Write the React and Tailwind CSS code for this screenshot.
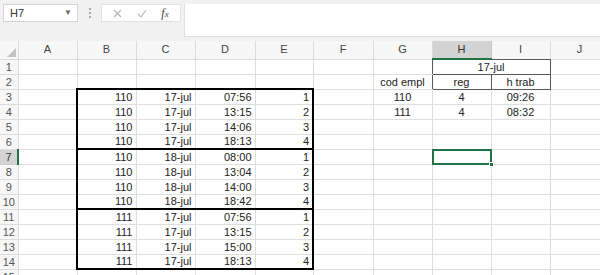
import React from 'react'

const COLS = ['A', 'B', 'C', 'D', 'E', 'F', 'G', 'H', 'I', 'J']
const WIDTHS = [18, 59, 59, 59, 60, 58, 60, 59, 59, 59, 59]

const DATA = {
  3: ['110', '17-jul', '07:56', '1'],
  4: ['110', '17-jul', '13:15', '2'],
  5: ['110', '17-jul', '14:06', '3'],
  6: ['110', '17-jul', '18:13', '4'],
  7: ['110', '18-jul', '08:00', '1'],
  8: ['110', '18-jul', '13:04', '2'],
  9: ['110', '18-jul', '14:00', '3'],
  10: ['110', '18-jul', '18:42', '4'],
  11: ['111', '17-jul', '07:56', '1'],
  12: ['111', '17-jul', '13:15', '2'],
  13: ['111', '17-jul', '15:00', '3'],
  14: ['111', '17-jul', '18:13', '4'],
}

const SUMMARY = {
  3: ['110', '4', '09:26'],
  4: ['111', '4', '08:32'],
}

const base = 'h-[15px] p-0 pt-px text-[#222] leading-none'

// each cell owns its right and bottom edge, like excel gridlines
function cellBorders(row, col) {
  const inBox = row >= 3 && row <= 14
  let right = 'border-r border-r-[#dedede]'
  let bottom = 'border-b border-b-[#dedede]'
  if ((col === 'A' || col === 'E') && inBox) right = 'border-r-2 border-r-black'
  if (['B', 'C', 'D', 'E'].includes(col) && [2, 6, 10, 14].includes(row)) bottom = 'border-b-2 border-b-black'
  if (col === 'G' && (row === 1 || row === 2)) right = 'border-r border-r-[#5a5a5a]'
  if ((col === 'H' || col === 'I') && row === 2) {
    right = 'border-r border-r-[#5a5a5a]'
    bottom = 'border-b border-b-[#5a5a5a]'
  }
  return ' ' + right + ' ' + bottom
}

function Toolbar() {
  return (
    <div className="h-[41px] bg-[#f1f1f1] flex items-start pt-1 pl-[3px] leading-none">
      <div className="w-[75px] h-[18px] bg-white border border-[#d4d4d4] flex items-center justify-between pl-[6px] pr-[5px] text-[11px] text-[#333]">
        <span>H7</span>
        <span className="text-[8px] text-[#666]">▼</span>
      </div>
      <div className="w-[23px] h-[18px] flex flex-col items-center justify-center gap-[2px]">
        <span className="w-[2px] h-[2px] bg-[#aaa]" />
        <span className="w-[2px] h-[2px] bg-[#aaa]" />
        <span className="w-[2px] h-[2px] bg-[#aaa]" />
      </div>
      <div className="w-[80px] h-[18px] bg-white border border-[#e2e2e2] flex items-center justify-around px-1">
        <svg width="9" height="9" viewBox="0 0 9 9"><path d="M1 1 L8 8 M8 1 L1 8" stroke="#b5b5b5" strokeWidth="1.1" /></svg>
        <svg width="10" height="9" viewBox="0 0 10 9"><path d="M1 5 L4 8 L9 1" stroke="#b5b5b5" strokeWidth="1.1" fill="none" /></svg>
        <span className="text-[12px] italic text-[#444] font-['Liberation_Serif',serif]">f<span className="text-[9px]">x</span></span>
      </div>
      <div className="ml-[3px] flex-1 h-[33px] bg-white border-l border-b border-[#e0e0e0]" />
    </div>
  )
}

export default function App() {
  const rows = Array.from({ length: 15 }, (_, i) => i + 1)
  return (
    <div className="w-[600px] h-[275px] overflow-hidden bg-white font-['Liberation_Sans',Arial,sans-serif] text-[11px] leading-none">
      <Toolbar />
      <table className="table-fixed border-collapse w-[609px] leading-none">
        <colgroup>
          {WIDTHS.map((w, i) => <col key={i} style={{ width: w }} />)}
        </colgroup>
        <thead>
          <tr className="h-[18px]">
            <th className="p-0 bg-[#f7f7f7] border-r border-b border-[#dcdcdc] relative">
              <svg className="absolute right-[2px] bottom-[2px]" width="9" height="9" viewBox="0 0 9 9"><path d="M9 0 L9 9 L0 9 Z" fill="#c4c4c4" /></svg>
            </th>
            {COLS.map(c => (
              <th key={c} className={
                c === 'H'
                  ? 'p-0 font-normal text-[#333] bg-[#d3d3d3] border-r border-r-[#c8c8c8] border-b-2 border-b-[#217346]'
                  : c === 'I'
                    ? 'p-0 font-normal text-[#444] bg-[#f7f7f7] border-r border-r-[#dcdcdc] border-b border-b-[#5a5a5a]'
                    : 'p-0 font-normal text-[#444] bg-[#f7f7f7] border-r border-b border-[#dcdcdc]'
              }>{c}</th>
            ))}
          </tr>
        </thead>
        <tbody>
          {rows.map(r => {
            const d = DATA[r]
            const s = SUMMARY[r]
            return (
              <tr key={r}>
                <td className={
                  r === 7
                    ? 'h-[15px] p-0 pt-px text-center text-[#333] bg-[#d3d3d3] border-b border-b-[#c8c8c8] border-r-2 border-r-[#217346]'
                    : 'h-[15px] p-0 pt-px text-center text-[#555] bg-[#f7f7f7] border-r border-b border-[#dcdcdc]'
                }>{r}</td>
                {COLS.map((c, ci) => {
                  if (r === 1 && c === 'I') return null
                  if (r === 1 && c === 'H') {
                    return (
                      <td key={c} colSpan={2} className={base + ' text-center border-r border-r-[#5a5a5a] border-b border-b-[#5a5a5a]'}>17-jul</td>
                    )
                  }
                  let text = ''
                  let align = 'text-right pr-[3px]'
                  if (d && ci >= 1 && ci <= 4) text = d[ci - 1]
                  if (r === 2) {
                    if (c === 'G') text = 'cod empl'
                    if (c === 'H') text = 'reg'
                    if (c === 'I') text = 'h trab'
                  }
                  if (s && ci >= 6 && ci <= 8) text = s[ci - 6]
                  if (ci >= 6) align = 'text-center'
                  const selected = r === 7 && c === 'H'
                  return (
                    <td key={c} className={base + ' ' + align + cellBorders(r, c) + (selected ? ' relative' : '')}>
                      {text}
                      {selected && (
                        <>
                          <span className="absolute -left-[1px] -top-[1px] -right-[1px] -bottom-[1px] border-2 border-[#217346]" />
                          <span className="absolute -right-[3px] -bottom-[3px] w-[5px] h-[5px] bg-[#217346] border border-white" />
                        </>
                      )}
                    </td>
                  )
                })}
              </tr>
            )
          })}
        </tbody>
      </table>
    </div>
  )
}
